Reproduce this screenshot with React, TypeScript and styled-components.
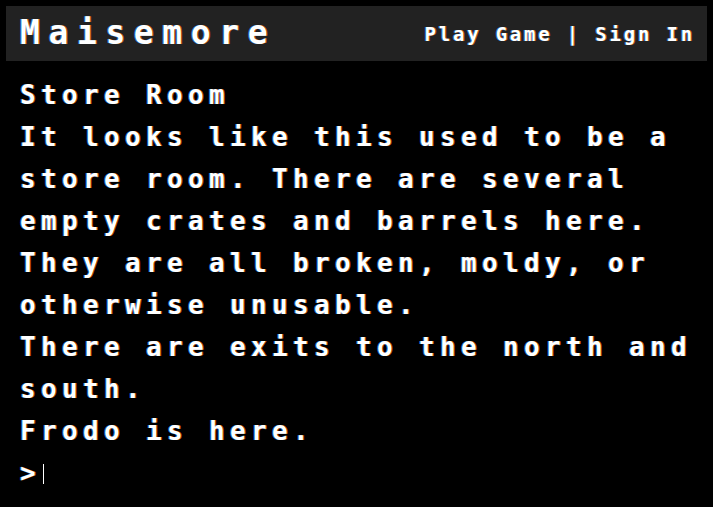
import styled, { createGlobalStyle } from 'styled-components'

const GlobalStyle = createGlobalStyle`
  html, body {
    margin: 0;
    padding: 0;
    background: #000;
  }

  body {
    color: #fff;
    font-family: 'DejaVu Sans Mono', 'Liberation Mono', monospace;
    font-weight: bold;
  }
`

const fringe = '-1px 0 rgba(40, 150, 255, 0.7), 1px 0 rgba(255, 110, 0, 0.7)'

const Page = styled.div`
  width: 713px;
  min-height: 507px;
  background: #000;
`

const Header = styled.header`
  display: flex;
  align-items: center;
  justify-content: space-between;
  height: 55px;
  margin: 6px 6px 0;
  padding: 0 12px 0 14px;
  background: #222;
`

const Title = styled.h1`
  margin: 0;
  padding-bottom: 3px;
  font-size: 33px;
  letter-spacing: 8.6px;
  font-weight: bold;
  text-shadow: ${fringe};
`

const Nav = styled.nav`
  display: flex;
  font-size: 19px;
  letter-spacing: 2.8px;
  text-shadow: ${fringe};
  white-space: pre;
`

const NavLink = styled.a`
  color: #fff;
  text-decoration: none;
  cursor: pointer;
`

const Output = styled.main`
  padding: 13px 12px 0 20px;
  font-size: 26px;
  line-height: 42px;
  letter-spacing: 5.35px;
  text-shadow: ${fringe};
`

const Line = styled.p`
  margin: 0;
`

const Prompt = styled.div`
  display: flex;
  align-items: center;
  height: 42px;
`

const Caret = styled.span`
  display: inline-block;
  width: 1px;
  height: 20px;
  margin-left: 2px;
  margin-top: 2px;
  background: #fff;
`

const lines = [
  'Store Room',
  'It looks like this used to be a store room. There are several empty crates and barrels here. They are all broken, moldy, or otherwise unusable.',
  'There are exits to the north and south.',
  'Frodo is here.',
]

export default function App() {
  return (
    <Page>
      <GlobalStyle />
      <Header>
        <Title>Maisemore</Title>
        <Nav>
          <NavLink>Play Game</NavLink>
          <span> | </span>
          <NavLink>Sign In</NavLink>
        </Nav>
      </Header>
      <Output>
        {lines.map((line) => (
          <Line key={line}>{line}</Line>
        ))}
        <Prompt>
          <span>&gt;</span>
          <Caret />
        </Prompt>
      </Output>
    </Page>
  )
}
